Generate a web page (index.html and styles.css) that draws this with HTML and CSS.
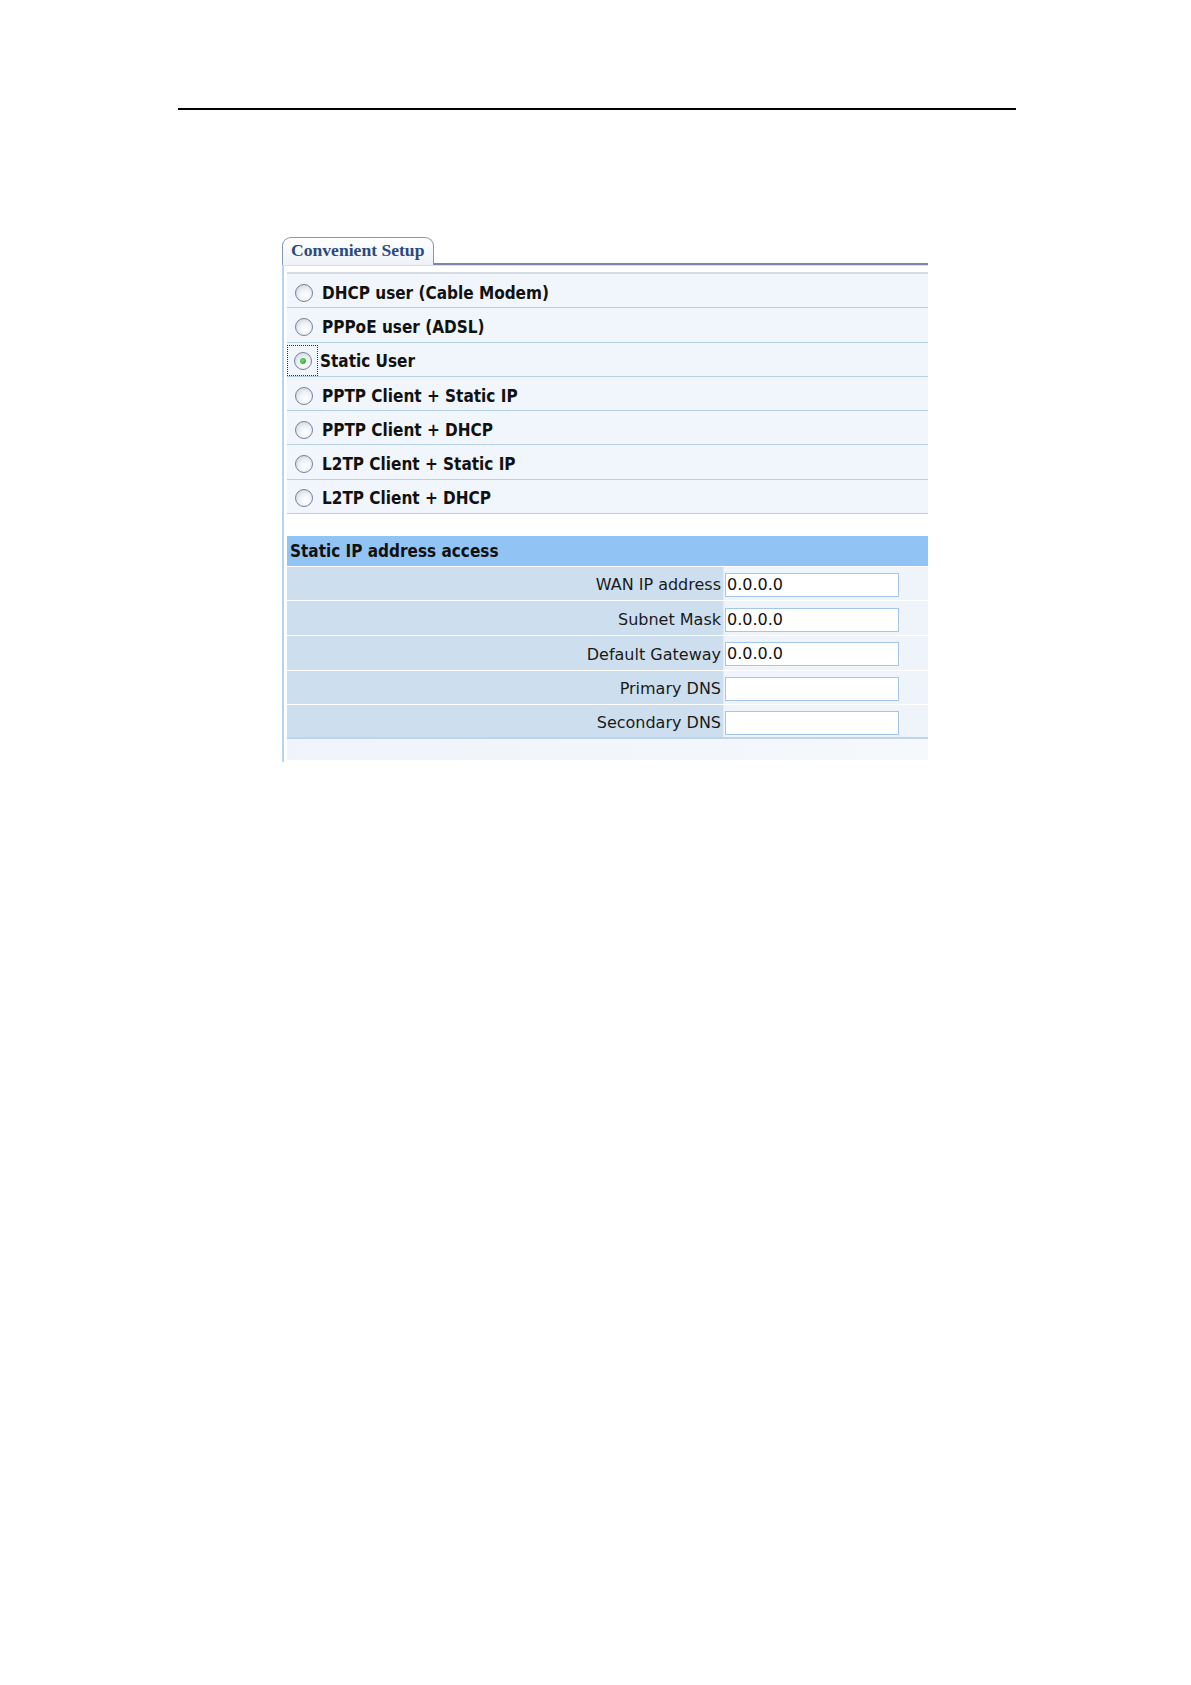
FILE: index.html
```html
<!DOCTYPE html>
<html>
<head>
<meta charset="utf-8">
<link rel="stylesheet" href="styles.css">
</head>
<body>
<div class="rule"></div>
<div class="panel">
  <div class="tabbar">
    <div class="tab">Convenient Setup</div>
    <div class="tabline"></div>
  </div>
  <div class="body">
    <div class="options">
      <div class="opt"><span class="radio"></span><span class="otext">DHCP user (Cable Modem)</span></div>
      <div class="opt"><span class="radio"></span><span class="otext">PPPoE user (ADSL)</span></div>
      <div class="opt"><span class="focus"><span class="radio checked"></span></span><span class="otext">Static User</span></div>
      <div class="opt"><span class="radio"></span><span class="otext">PPTP Client + Static IP</span></div>
      <div class="opt"><span class="radio"></span><span class="otext">PPTP Client + DHCP</span></div>
      <div class="opt"><span class="radio"></span><span class="otext">L2TP Client + Static IP</span></div>
      <div class="opt"><span class="radio"></span><span class="otext">L2TP Client + DHCP</span></div>
    </div>
    <div class="header">Static IP address access</div>
    <div class="fields">
      <div class="frow"><div class="label">WAN IP address</div><div class="value"><div class="input">0.0.0.0</div></div></div>
      <div class="frow"><div class="label">Subnet Mask</div><div class="value"><div class="input">0.0.0.0</div></div></div>
      <div class="frow"><div class="label">Default Gateway</div><div class="value"><div class="input">0.0.0.0</div></div></div>
      <div class="frow"><div class="label">Primary DNS</div><div class="value"><div class="input"></div></div></div>
      <div class="frow last"><div class="label">Secondary DNS</div><div class="value"><div class="input"></div></div></div>
    </div>
    <div class="foot"></div>
  </div>
</div>
</body>
</html>
```
FILE: styles.css
```css
html, body {
  margin: 0;
  padding: 0;
  background: #ffffff;
}
body {
  width: 1191px;
  height: 1685px;
  font-family: "DejaVu Sans Condensed", "DejaVu Sans", sans-serif;
}
.rule {
  margin: 108px 0 0 178px;
  width: 838px;
  height: 2px;
  background: #000;
}
.panel {
  margin: 127px 0 0 282px;
  width: 646px;
}
.tabbar {
  display: flex;
  align-items: flex-end;
  height: 28px;
}
.tab {
  box-sizing: border-box;
  width: 152px;
  height: 28px;
  border: 1px solid #8595b3;
  border-bottom: none;
  border-radius: 9px 9px 0 0;
  background: linear-gradient(#ffffff, #eef2f7);
  font-family: "Liberation Serif", serif;
  font-weight: bold;
  font-size: 17.6px;
  color: #2b4a7c;
  padding: 2px 0 0 8px;
  white-space: nowrap;
}
.tabline {
  flex: 1;
  height: 0;
  border-bottom: 2px solid #7b87a8;
}
.body {
  border-left: 2px solid #b3d5f1;
  border-top: 1px solid #c4e6f6;
  padding: 6px 0 0 3px;
  height: 497px;
  box-sizing: border-box;
}
.options {
  border-top: 2px solid #d6dce4;
}
.opt {
  box-sizing: border-box;
  height: 34.3px;
  background: #f0f6fc;
  border-bottom: 1px solid #b5d1ea;
  display: flex;
  align-items: center;
  padding: 4px 0 0 8px;
  font-weight: bold;
  font-size: 17px;
  color: #111;
}
.radio {
  box-sizing: border-box;
  width: 18px;
  height: 18px;
  border-radius: 50%;
  border: 1px solid #72839b;
  background: radial-gradient(circle at 60% 65%, #ffffff 0%, #eef1f4 45%, #c4ccd5 100%);
  display: flex;
  align-items: center;
  justify-content: center;
  flex: none;
}
.radio.checked::after {
  content: "";
  width: 6px;
  height: 6px;
  border-radius: 50%;
  background: radial-gradient(circle at 40% 40%, #6fdc6f, #1f9a2a);
}
.focus {
  box-sizing: border-box;
  width: 31px;
  height: 31px;
  align-self: flex-start;
  margin: -2px 0 0 -8px;
  padding: 1px 0 0 6px;
  border: 1px dotted #333;
  display: flex;
  align-items: center;
  flex: none;
}
.otext {
  margin-left: 9px;
  white-space: nowrap;
}
.focus + .otext {
  margin-left: 2px;
}
.header {
  margin-top: 21.5px;
  height: 30px;
  background: #91c4f4;
  display: flex;
  align-items: center;
  padding-left: 3px;
  font-weight: bold;
  font-size: 17px;
  color: #111;
}
.fields {
  display: flex;
  flex-direction: column;
}
.frow {
  box-sizing: border-box;
  height: 34.7px;
  display: grid;
  grid-template-columns: 436px 1fr;
  border-top: 1px solid #ffffff;
}
.frow.last {
  border-bottom: 2px solid #bad5ef;
}
.label {
  background: #cddfee;
  display: flex;
  align-items: center;
  justify-content: flex-end;
  padding: 3px 2px 0 0;
  font-family: "DejaVu Sans", sans-serif;
  font-size: 16px;
  color: #1a1a1a;
  white-space: nowrap;
}
.value {
  background: #eef4fa;
  border-left: 1px solid #e2ecf6;
  display: flex;
  align-items: center;
  padding: 3px 0 0 1px;
}
.input {
  box-sizing: border-box;
  width: 174px;
  height: 24px;
  background: #fff;
  border: 1px solid #a4c6e8;
  font-family: "DejaVu Sans", sans-serif;
  font-size: 16px;
  color: #111;
  padding: 0 0 0 1px;
  line-height: 22px;
}
.foot {
  height: 21px;
  background: linear-gradient(90deg, #eef4fa, #f5f9fc);
}
```
